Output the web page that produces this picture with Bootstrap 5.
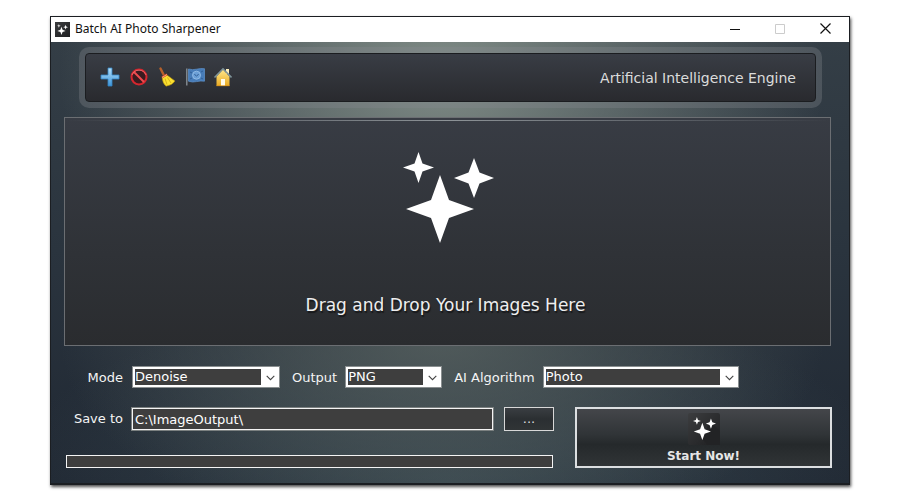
<!DOCTYPE html>
<html lang="en">
<head>
<meta charset="utf-8">
<meta name="viewport" content="width=device-width, initial-scale=1">
<title>Batch AI Photo Sharpener</title>
<link rel="stylesheet" href="https://cdn.jsdelivr.net/npm/bootstrap@5.3.0/dist/css/bootstrap.min.css">
<style>
  body { background: #fff; font-family: "DejaVu Sans", Verdana, sans-serif; font-size: 13px; line-height: 16px; }
  .page { padding: 16px 50px; }
  .app-window {
    border: 1px solid #1b1e22;
    border-bottom-width: 2px;
    box-shadow: 1px 2px 3px rgba(0, 0, 0, .7);
    background:
      radial-gradient(ellipse 48% 56% at 49% 12%, rgba(136, 148, 141, .92), rgba(136, 148, 141, 0)),
      radial-gradient(ellipse 48% 46% at 49% 68%, rgba(90, 100, 98, .8), rgba(90, 100, 98, 0)),
      radial-gradient(ellipse 56% 40% at 50% 100%, rgba(64, 82, 89, .7), rgba(64, 82, 89, 0)),
      linear-gradient(180deg, #353f47 0%, #2a343e 50%, #202833 100%);
  }
  .title-bar { height: 25px; background: #fff; color: #111; font-family: "Noto Sans", sans-serif; padding-left: 4px; }
  .title-bar h1 { font-size: 12px; line-height: 16px; font-weight: 400; margin: 0 0 2px 5px; }
  .win-btn { width: 45px; height: 24px; padding: 0 6px 2px 4px; border: 0; background: none; color: #111; }
  .win-btn:disabled { color: #ccc; }
  .win-btn svg { display: block; margin: 0 auto; }
  .work { padding: 5px 18px 15px 13px; }
  .tool-frame { margin: 0 9px 9px 15px; padding: 6px; border-radius: 10px; background: rgba(134, 138, 142, .32); }
  .tool-panel {
    height: 49px; padding: 0 19px 0 13px; border: 1px solid #1b1d20; border-radius: 4px;
    background: linear-gradient(#393d45, #292a2e); color: #dcdcdc; font-size: 14px;
  }
  .tool-row { padding-bottom: 2px; }
  .tool-btn { display: flex; padding: 1px; border: 0; background: none; }
  .drop-zone {
    height: 229px; padding: 34px 0 0 2px; border: 1px solid #6b6e72; color: #eee;
    background:
      linear-gradient(90deg, rgba(150, 156, 160, 0), rgba(150, 156, 160, .9), rgba(150, 156, 160, 0)) 0 2px / 100% 1px no-repeat,
      linear-gradient(#383c44, #2f3237 60%, #2a2c2f);
  }
  .drop-zone p { margin: 50px 6px 0 0; font-size: 17px; line-height: 24px; text-shadow: 1px 2px 1px rgba(0, 0, 0, .5); }
  .settings { margin-top: 20px; padding-left: 2px; color: #f4f4f4; }
  .settings label { padding-top: 2px; }
  .first-label { width: 57px; text-align: right; }
  .next-label { margin: 0 8px 0 12px; }
  .choice {
    appearance: none; height: 22px; padding: 0 22px 0 2px; border: 1px solid #8a8f90; border-radius: 0; color: #fff;
    background:
      url("data:image/svg+xml,%3Csvg xmlns='http://www.w3.org/2000/svg' width='9' height='6'%3E%3Cpath d='M.7.8l3.800 3.800L8.300.8' fill='none' stroke='%23444' stroke-width='1.100'/%3E%3C/svg%3E") right 4px top 8px / 9px 6px no-repeat,
      linear-gradient(#3e3e3e, #3e3e3e) 2px 2px / calc(100% - 20px) calc(100% - 4px) no-repeat,
      #fff;
  }
  .mode, .folder { margin-left: 9px; }
  .mode { flex: 0 1 148px; }
  .format { flex: 0 1 97px; }
  .algorithm { flex: 0 1 196px; }
  .actions { display: grid; grid-template-columns: 487fr 257fr; column-gap: 22px; margin: 19px -1px 0 2px; color: #f4f4f4; }
  .folder { height: 22px; min-width: 0; padding: 0 2px; border: 1px solid #f4f4f4; outline: 1px solid #7b8080; background: #3e3e3e; color: #fff; }
  .browse-btn { width: 50px; height: 24px; margin: 0 -1px 0 11px; padding: 0; border: 1px solid #d8d8d8; background: linear-gradient(#3a3e42, #2b2f32 50%, #303436); color: #ddd; }
  .job-progress { height: 13px; border: 1px solid #f4f4f4; border-radius: 0; background: #3e3e3e; }
  .start-btn {
    padding: 4px 0 2px; border: 2px solid #dcdfe1; color: #e6e6e6; font-size: 12px; font-weight: 700; row-gap: 3px;
    background: linear-gradient(#44464a, #303437 45%, #25292b 62%, #303436);
  }
</style>
<script src="https://cdn.jsdelivr.net/npm/bootstrap@5.3.0/dist/js/bootstrap.bundle.min.js"></script>
</head>
<body>
<svg width="0" height="0" class="position-absolute" aria-hidden="true">
  <defs>
    <symbol id="sparkles" viewBox="0 0 91 91">
      <path fill="#fff" d="M37 23l9 25 25 9-25 9-9 25-9-25-25-9 25-9zM15.500 0l4 11.500 11.500 4-11.500 4-4 11.500-4-11.500-11.500-4 11.500-4zM71 6l5.500 14.500L91 26l-14.500 5.500L71 46l-5.500-14.500L51 26l14.500-5.500z"/>
    </symbol>
    <linearGradient id="tile" x2="1" y2="1"><stop stop-color="#3c3d3f"/><stop offset="1" stop-color="#1d1e20"/></linearGradient>
    <linearGradient id="blue" x2="0" y2="1"><stop stop-color="#b4e0fa"/><stop offset="1" stop-color="#3d94d8"/></linearGradient>
    <linearGradient id="gold" x2="0" y2="1"><stop stop-color="#ffe88d"/><stop offset="1" stop-color="#e9aa22"/></linearGradient>
  </defs>
</svg>
<div class="page">
  <main class="app-window">
    <header class="title-bar d-flex align-items-center">
      <svg width="15" height="15" viewBox="0 0 15 15" aria-hidden="true"><rect width="15" height="15" fill="url(#tile)"/><use href="#sparkles" x="2" y="2" width="11" height="11"/></svg>
      <h1 class="me-auto">Batch AI Photo Sharpener</h1>
      <button class="win-btn" type="button" aria-label="Minimize"><svg width="11" height="11" viewBox="0 0 11 11"><path d="M0 6.500h10" stroke="currentColor"/></svg></button>
      <button class="win-btn" type="button" aria-label="Maximize" disabled><svg width="11" height="11" viewBox="0 0 11 11"><path d="M.5 1.500h9v9h-9z" fill="none" stroke="currentColor"/></svg></button>
      <button class="win-btn" type="button" aria-label="Close"><svg width="11" height="11" viewBox="0 0 11 11"><path d="M.5.5l10 10m0-10l-10 10" stroke="currentColor" stroke-width="1.200"/></svg></button>
    </header>

    <div class="work">
      <div class="tool-frame">
        <div class="tool-panel d-flex align-items-center justify-content-between">
          <div class="tool-row d-flex">
            <button class="tool-btn me-2" type="button" aria-label="Add images"><svg width="20" height="20" viewBox="0 0 20 20"><path d="M8 1h4v7h7v4h-7v7H8v-7H1V8h7z" fill="url(#blue)" stroke="#3485c5" stroke-width=".8"/></svg></button>
            <button class="tool-btn me-1" type="button" aria-label="Remove image"><svg width="20" height="20" viewBox="0 0 20 20"><circle cx="9" cy="10" r="7.500" fill="#3a1b20" stroke="#d5262e" stroke-width="2"/><path d="M4 5l10 10" stroke="#ee4c50" stroke-width="2"/><path d="M2 8a7.500 7.500 0 0 1 14 0" fill="none" stroke="#f59090" stroke-width=".6"/></svg></button>
            <button class="tool-btn me-2" type="button" aria-label="Clear list"><svg width="20" height="20" viewBox="0 0 20 20"><path d="M4.500 1.500l3 6" stroke="#b5602b" stroke-width="2.400" stroke-linecap="round"/><path d="M11 8l8 6q-3 4.500-9 5.200-3.500-3-4-9z" fill="#fbe02f" stroke="#a8850c" stroke-width=".6"/><path d="M9 11.500l2 6M11.500 10.500l3.500 5.500" stroke="#c9a518" stroke-width=".8"/><path d="M5.500 9.500L10.500 6.500l1 1.800-5 3z" fill="#d84424"/><path d="M6 10.500l5-3" stroke="#ffd9a0" stroke-width=".7"/></svg></button>
            <button class="tool-btn me-1" type="button" aria-label="Language"><svg width="20" height="20" viewBox="0 0 20 20"><path d="M.8 1.500v17" stroke="#8c949b" stroke-width="1.300"/><path d="M2.500 2q4 1.200 8 .2t8-.5v12.500q-4-.6-8 .4t-8-.4z" fill="#477cb8" stroke="#5e94cf" stroke-width=".7"/><circle cx="10.500" cy="8.200" r="4" fill="#6b9fd6" stroke="#94bde6" stroke-width=".9"/><path d="M8.500 7q2 4 4 0M4 5l2 1m9-1l2-1M4 12l2-1m9 0l2 1" fill="none" stroke="#315f96"/></svg></button>
            <button class="tool-btn" type="button" aria-label="Home page"><svg width="20" height="20" viewBox="0 0 20 20"><path d="M14 2h3v5h-3z" fill="#fff0bd"/><path d="M4.500 9.500L11 2.500l6.500 7V19h-13z" fill="url(#gold)"/><path d="M2.500 10.500L11 1.800l8.500 8.700" fill="none" stroke="#7d9298" stroke-width="1.600"/><path d="M9 12h4v7H9z" fill="#fffbea"/><path d="M4.500 18.700h13" stroke="#d48f18" stroke-width=".8"/></svg></button>
          </div>
          <span>Artificial Intelligence Engine</span>
        </div>
      </div>

      <section class="drop-zone text-center" aria-label="Image drop area">
        <svg class="d-block mx-auto" width="91" height="91" aria-hidden="true"><use href="#sparkles"/></svg>
        <p>Drag and Drop Your Images Here</p>
      </section>

      <form>
        <div class="settings d-flex align-items-center">
          <label class="first-label" for="mode">Mode</label>
          <select class="choice mode" id="mode"><option>Denoise</option></select>
          <label class="next-label" for="format">Output</label>
          <select class="choice format" id="format"><option>PNG</option></select>
          <label class="next-label" for="algorithm">AI Algorithm</label>
          <select class="choice algorithm" id="algorithm"><option>Photo</option></select>
        </div>
        <div class="actions">
          <div class="d-flex flex-column justify-content-between">
            <div class="d-flex align-items-center">
              <label class="first-label" for="folder">Save to</label>
              <input class="folder flex-grow-1" id="folder" type="text" value="C:\ImageOutput\">
              <button class="browse-btn" type="button" aria-label="Browse for folder">...</button>
            </div>
            <div class="job-progress progress" role="progressbar" aria-label="Progress" aria-valuenow="0" aria-valuemin="0" aria-valuemax="100"></div>
          </div>
          <button class="start-btn d-flex flex-column align-items-center" type="button">
            <svg width="32" height="32" viewBox="0 0 32 32" aria-hidden="true"><rect width="32" height="32" rx="2" fill="url(#tile)"/><path d="M14 26l8-18 10 10v14H20z" fill="#222325"/><use href="#sparkles" x="5" y="4" width="23" height="23"/></svg>
            <span>Start Now!</span>
          </button>
        </div>
      </form>
    </div>
  </main>
</div>
</body>
</html>
